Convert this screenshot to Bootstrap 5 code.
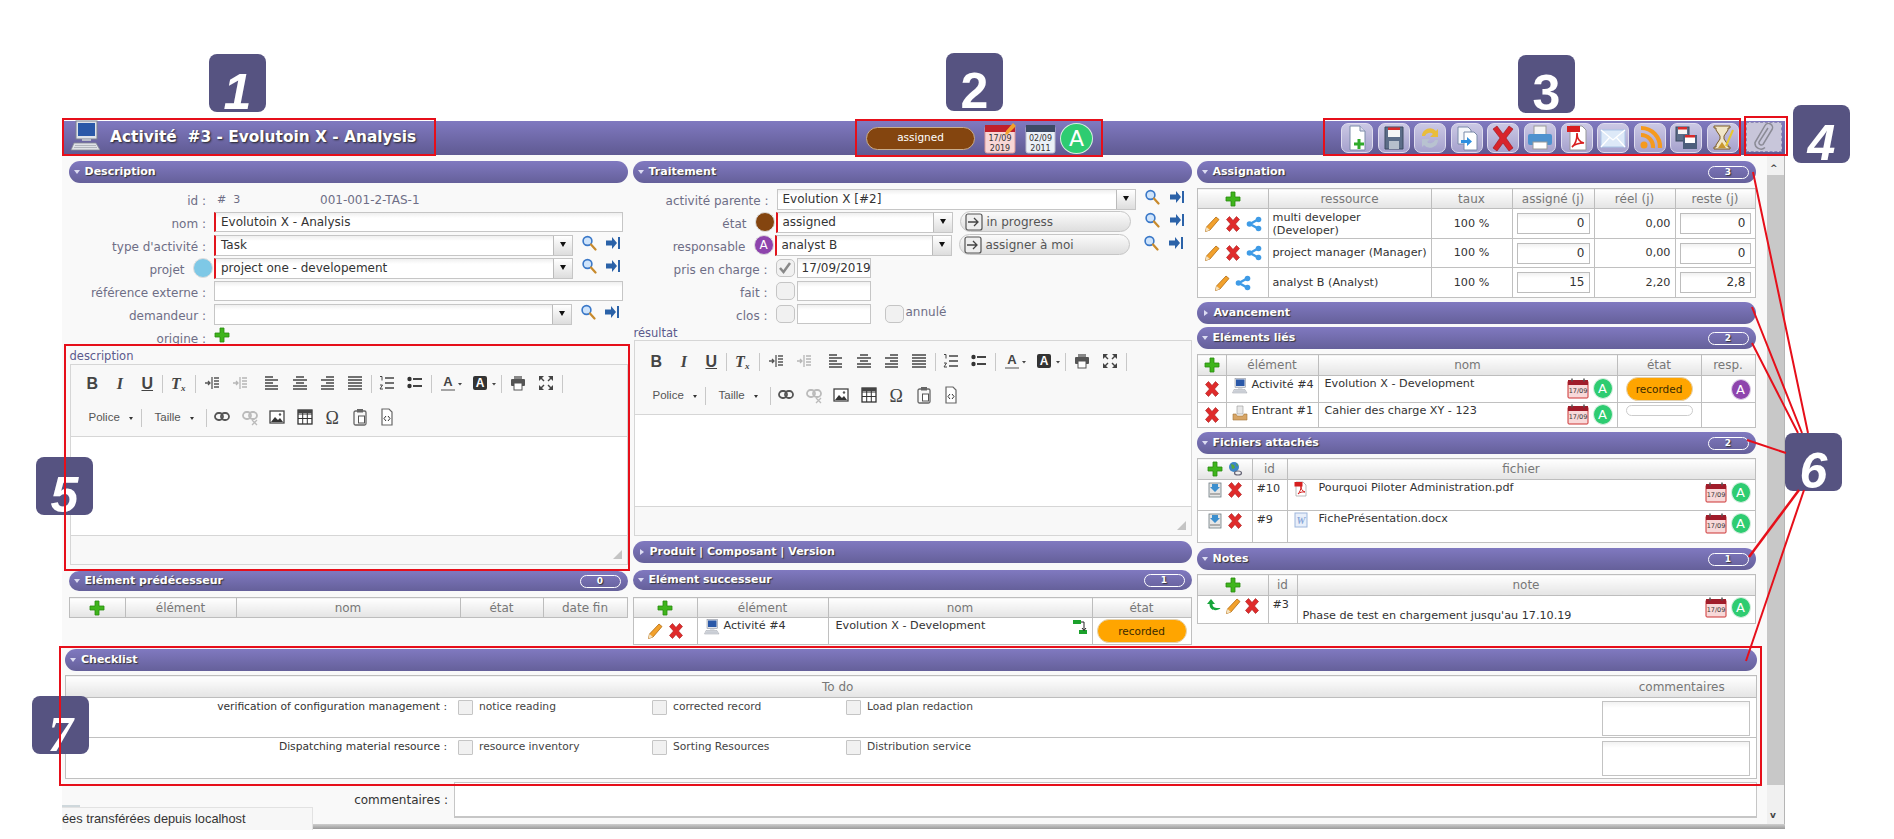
<!DOCTYPE html>
<html lang="fr"><head><meta charset="utf-8">
<link href="https://cdn.jsdelivr.net/npm/bootstrap@5.3.0/dist/css/bootstrap.min.css" rel="stylesheet">
<style>
html,body{height:839px;overflow:hidden;background:#fff}
body{font-family:"DejaVu Sans",sans-serif;font-size:11px;color:#333}
svg{display:block;flex:none}
.shot{position:relative;width:1894px;height:839px;overflow:hidden;padding:121px 0 0 62px}
.appbar{width:1723px;height:34px;background:linear-gradient(#8079c0,#5f5a92);color:#fff}
.appicon{margin:-4px 0 0 8px;width:32px;height:32px}
.apptitle{font-weight:700;font-size:15.4px;margin-left:8px;width:748px;text-shadow:1px 1px 2px #222;white-space:pre}
.statusgrp{width:260px;gap:9px}
.statuspill{width:109px;height:23px;border-radius:12px;background:#84450f;border:1px solid #c9ad8c;font-size:10.5px;color:#fff}
.toolgrp{margin-left:auto;gap:4.6px;margin-right:46px}
.tbtn{width:32px;height:30px;border:1px solid #dedcee;border-radius:7px;background:linear-gradient(#cbc8e4,#a5a1cd)}
.clipbtn{position:absolute;left:1746px;top:122px;width:36px;height:30px;background:#c8c6da;border:1px dashed #8d89b5}
.work{width:1723px;height:669px;background:#f9f9f9;border-right:1px solid #b5b5b5}
.pane{width:1706px;height:669px;position:relative;overflow:hidden}
.cols{height:494px;padding:6px 0 0 6.5px;gap:5px}
.colm{width:559px}
.sect{height:22px;border-radius:11px;background:linear-gradient(#8079c0,#65609a);color:#fff;font-weight:700;font-size:11px;padding:0 7px 0 5px;text-shadow:1px 1px 1px #333;flex:none}
.sect.h20{height:20px}
.sect .tri{width:0;height:0;border-left:3.5px solid transparent;border-right:3.5px solid transparent;border-top:4px solid #dcdcf2;margin-right:5px}
.sect .tri.shut{border-top:3.5px solid transparent;border-bottom:3.5px solid transparent;border-left:4px solid #dcdcf2;border-right:0;margin-right:6px;margin-left:2px}
.cnt{margin-left:auto;width:41px;height:13px;border:1px solid #fff;border-radius:7px;font-size:9px;line-height:11px;text-align:center}
.frow{height:23px;color:#6e6e86}
.lab{text-align:right;flex:none;padding-right:8px;font-size:12px;white-space:nowrap}
.fx{height:20px;border:1px solid #c6c6c6;background:linear-gradient(#efefef 0,#fff 5px);padding:0 0 0 5px;font-size:12px;color:#333;line-height:18px;white-space:nowrap;overflow:hidden}
.req{border-left:2px solid #e2141c}
.arrowbox{margin-left:auto;width:19px;height:100%;border-left:1px solid #bbb;background:linear-gradient(#fff,#ddd);flex:none}
.arrowbox::after{content:"";display:block;margin:6px auto 0;width:0;height:0;border-left:3.5px solid transparent;border-right:3.5px solid transparent;border-top:5px solid #111}
.dot{width:20px;height:20px;border-radius:50%;flex:none;border:1px solid #ddd}
.round{color:#fff;text-align:center}
.trans{height:21px;width:171px;border:1px solid #c6c6c6;border-radius:11px;background:linear-gradient(#fbfbfb,#dedede);font-size:12px;color:#555;gap:4px;padding-left:4px}
.ck{width:19px;height:18px;border:1px solid #c5c5c5;border-radius:5px;background:#f1f1f1;flex:none}
.edl{height:14px;line-height:13px;font-size:11.5px;color:#5b5a8c;padding-left:1px}
.edit{border:1px solid #d6d6d6;background:#f8f8f8;margin-left:1px;width:558px}
.edbar{border-bottom:1px solid #d6d6d6;padding:2px 0 0 8px}
.edbar.low{padding-top:4px}
.edrow{height:34px;color:#333}
.ei{width:27.5px;height:20px;font-family:"Liberation Sans",sans-serif;font-size:16px;font-weight:700;color:#444;text-align:center;line-height:20px;flex:none}
.ei.sf{font-family:"Liberation Serif",serif}
.ei.gp{margin-left:5px}
.ei.gq{margin-left:3px}
.sep{width:1px;height:18px;background:#c8c8c8;margin:0 2px;flex:none}
.sep.sa{margin:0 1.5px 0 1px}
.sep.sb{margin:0 2.5px 0 3px}
.sep.sc{margin:0 3px 0 9px}
.combo{font-family:"Liberation Sans",sans-serif;font-size:11.5px;color:#555;flex:none}
.combo::after{content:"";display:inline-block;margin-left:9px;vertical-align:middle;border-left:2.5px solid transparent;border-right:2.5px solid transparent;border-top:3px solid #333}
.cpol{width:52px;padding-left:10px;box-sizing:content-box}
.ctal{width:51px;padding-left:11px;box-sizing:content-box}
.sep.sd{margin:0 2px 0 0}
.edbody{background:#fff;border-bottom:1px solid #d6d6d6}
.edfoot{position:relative}
.edfoot::after{content:"";position:absolute;right:5px;bottom:5px;width:0;height:0;border-bottom:9px solid #c4c4c4;border-left:9px solid transparent}
table.grid{width:100%;table-layout:fixed;border-collapse:collapse;background:#fff;font-size:11.2px;margin:0}
table.grid th{height:20px;background:linear-gradient(#fff,#e4e4e4);border:1px solid #bdbdbd;font-weight:400;color:#777;text-align:center;padding:0;font-size:12px}
table.grid.thk th{height:21px}
table.grid td{border:1px solid #c0c0c0;padding:0 4px;vertical-align:middle;color:#333;overflow:hidden;white-space:nowrap;position:relative;line-height:14px}
.ico{gap:5px}
.num{height:21px;border:1px solid #bdbdbd;text-align:right;padding:0 4px;line-height:19px;background:linear-gradient(#f1f1f1,#fff 5px);font-size:12px}
.pill{height:24px;border-radius:12px;background:#ffa500;text-align:center;line-height:22px;border:1px solid #e4d3b2;font-size:10.5px;color:#3b2a00}
.pill.none{height:11px;background:#fff;border-color:#ccc}
.cal{width:22px;height:21px}
.av{width:20px;height:21px;border-radius:50%;background:#2ecc71;color:#fff;font-size:13px;line-height:20px;text-align:center;flex:none;border:1px solid #d7eee0}
.av.big{width:33px;height:31px;line-height:30px;font-size:22px;margin-left:-5px}
.av.vi{background:#8e44ad;border-color:#dcd0e6}
.list{width:1692px;margin-left:3px}
table.grid.chk td{vertical-align:top;padding:2px 0 0 0}
table.grid.chk td+td,table.grid.chk th+th{border-left:0}
table.grid.chk td:first-child,table.grid.chk th:first-child{border-right:0;padding-left:8px}
table.grid.chk td:first-child{padding-left:0}
table.grid.chk th+th{padding-left:6px}
.chkitem{gap:6px;width:194px;flex:none;font-size:10.7px;color:#444;line-height:14px}
.chkitem .ck{width:15px;height:15px;border-radius:1px}
.chklab{width:392px;text-align:right;padding-right:11px;font-size:10.7px;color:#333;flex:none;line-height:14px}
.note{width:148px;height:35px;border:1px solid #c3c3c3;background:linear-gradient(#f2f2f2,#fff 6px);margin:1px 7px 0 0}
.cmtrow{margin-top:3px}
.cmtbox{margin-left:6px;width:1303px;height:36px;border:1px solid #c6c6c6;border-bottom:2px solid #c6c6c6;background:#fff}
.sbar{width:17px;height:669px;background:#f0f0f0;position:relative;flex:none}
.sbar .thumb{position:absolute;left:0;right:0;top:20px;height:610px;background:#c8c8c8}
.sbar span{position:absolute;left:3px;font-size:9px;color:#444;line-height:10px;font-weight:700}
.split{width:1723px;height:5px;background:linear-gradient(#cfcfcf,#9a9a9a)}
.dlbar{position:absolute;left:62px;top:807px;width:251px;height:23px;background:#f7f7f7;border:1px solid #e2e2e2;border-width:1px 1px 0 0;font-size:12.8px;line-height:22px;color:#333;font-family:"Liberation Sans",sans-serif;white-space:nowrap}
.dlbar::before{content:"";position:absolute;left:0;top:-3px;width:18px;height:2px;background:#cfd8dc}
.mark{position:absolute;width:57px;height:58px;border-radius:8px;background:#565381;color:#fff;font-family:"Liberation Sans",sans-serif;font-weight:700;font-style:italic;font-size:50px;line-height:58px;text-align:center}
.box{position:absolute;border:2px solid #e60f1a;pointer-events:none}
.lines{position:absolute;left:0;top:0;pointer-events:none}
</style></head><body>
<svg width="0" height="0" style="position:absolute">
<defs>
<symbol id="plus" viewBox="0 0 16 16"><path d="M6 1h4v5h5v4h-5v5H6v-5H1V6h5z" fill="#3fb51c" stroke="#2a8b10" stroke-width=".8"/></symbol>
<symbol id="find" viewBox="0 0 16 16"><circle cx="6.500" cy="6" r="4.400" fill="#cfe4fb" stroke="#3a78c8" stroke-width="1.600"/><path d="M10 9.500l4.500 5" stroke="#c88a2c" stroke-width="2.200" stroke-linecap="round"/></symbol>
<symbol id="goto" viewBox="0 0 16 16"><path d="M1 5.500h6V2l5 6-5 6v-3.500H1z" fill="#2b62a8"/><rect x="13" y="2" width="2" height="12" fill="#2b62a8"/></symbol>
<symbol id="pen" viewBox="0 0 16 16"><path d="M12 1l3 2.500-9 10.500-4.500 1.500L2.500 11z" fill="#f2a12c" stroke="#b06a10" stroke-width=".8"/><path d="M2.500 11L6 14l-4.500 1.500z" fill="#f5e3c0"/></symbol>
<symbol id="del" viewBox="0 0 16 16"><path d="M1.500 3.500L4.500 .5 8 4.500 11.500 .5 14.500 3.500 10.500 8 14.500 12.500 11.500 15.500 8 11.500 4.500 15.500 1.500 12.500 5.500 8z" fill="#e02b2b" stroke="#a51616" stroke-width=".6"/></symbol>
<symbol id="share" viewBox="0 0 16 16"><path d="M12 3.500L4 8l8 4.500" fill="none" stroke="#3f9be6" stroke-width="2.400"/><circle cx="12.500" cy="3.500" r="2.800" fill="#3f9be6"/><circle cx="12.500" cy="12.500" r="2.800" fill="#3f9be6"/><circle cx="3.500" cy="8" r="2.800" fill="#3f9be6"/></symbol>
<symbol id="pc" viewBox="0 0 32 32"><rect x="6" y="1" width="21" height="18" fill="#dfe3ea" stroke="#7c8290"/><rect x="8" y="3" width="17" height="13" fill="#2a58a8"/><path d="M12 19h9v2h-9z" fill="#b7bcc6"/><path d="M4 23h22l4 7H1z" fill="#dfe2e7" stroke="#858b96" stroke-width=".8"/><path d="M5 25.500h21M4 27.500h23" stroke="#a5aab3" stroke-width=".8"/></symbol>
<symbol id="inbox" viewBox="0 0 16 16"><path d="M5 1h6v8H5z" fill="#e8e8e8" stroke="#999" stroke-width=".6"/><path d="M1 9h3l1 2h6l1-2h3v6H1z" fill="#d7a566" stroke="#a27435" stroke-width=".6"/></symbol>
<symbol id="pdf" viewBox="0 0 16 16"><path d="M3 1h7l3 3v11H3z" fill="#fff" stroke="#aaa" stroke-width=".8"/><rect x="1.500" y="1" width="8" height="4.500" fill="#d51f1f"/><path d="M5 13c2-2 3-5 3-8 0 3 1 5 4 6-3-.3-5 .2-7 2z" fill="none" stroke="#d51f1f" stroke-width="1"/></symbol>
<symbol id="word" viewBox="0 0 16 16"><rect x="2" y="1" width="12" height="14" fill="#e8effa" stroke="#9db6dc"/><text x="8" y="12" font-size="10" font-style="italic" font-weight="700" fill="#8aa8d8" text-anchor="middle" font-family="Liberation Serif">W</text></symbol>
<symbol id="dl" viewBox="0 0 16 16"><rect x="2" y="1" width="12" height="14" fill="#e6e6e6" stroke="#6d7a80" stroke-width=".8"/><path d="M5 2h6v3h2l-5 5-5-5h2z" fill="#3c8fce"/><path d="M3 12h10" stroke="#777"/></symbol>
<symbol id="globe" viewBox="0 0 16 16"><circle cx="7" cy="6" r="5" fill="#3d86c6"/><path d="M4 3l3 1 1 3-3 1zM9 2l2 2-1 2z" fill="#58a83a"/><ellipse cx="11" cy="12" rx="3.500" ry="2" fill="none" stroke="#667" stroke-width="1.200"/></symbol>
<symbol id="undo" viewBox="0 0 16 16"><path d="M1 6l4-5 4 5H6.500c0 3 2 4.500 8 4-2 3-11 4-11-4z" fill="#16a53a"/></symbol>
<symbol id="flow" viewBox="0 0 16 16"><rect x="1" y="1" width="8" height="4" fill="#1ba12c"/><rect x="7" y="11" width="8" height="4" fill="#1ba12c"/><path d="M9 3h3v8M10 9l2 2.500L14 9" fill="none" stroke="#222"/></symbol>
<symbol id="trans" viewBox="0 0 18 18"><rect x="1" y="1" width="16" height="16" rx="2" fill="#eee" stroke="#555" stroke-width="1.200"/><path d="M3 9h10M9 5l4 4-4 4" fill="none" stroke="#444" stroke-width="1.300"/></symbol>
<symbol id="calr" viewBox="0 0 22 21" preserveAspectRatio="none"><rect x="1" y="3" width="20" height="17" rx="1" fill="#f8d9d9" stroke="#c33"/><rect x="1" y="2" width="20" height="5" fill="#a01c2a"/><path d="M5 .5v3M17 .5v3" stroke="#555" stroke-width="1.500"/><text x="11" y="15" font-size="6.500" text-anchor="middle" fill="#333" font-family="DejaVu Sans">17/09</text></symbol>
<symbol id="tnew" viewBox="0 0 30 28"><path d="M8 2h10l5 5v19H8z" fill="#fff" stroke="#7a8aa8"/><path d="M18 2v5h5" fill="#dde" stroke="#7a8aa8"/><path d="M15.500 15h3v3.500h3.500v3h-3.500V25h-3v-3.500H12v-3h3.500z" fill="#2faa2a"/></symbol>
<symbol id="tsave" viewBox="0 0 30 28"><path d="M6 3h18v22H6z" fill="#5c6d88" stroke="#3c4a60"/><rect x="9" y="6" width="12" height="7" fill="#f5f5f5"/><rect x="9" y="3.500" width="12" height="2.500" fill="#d92a2a"/><rect x="10" y="17" width="10" height="8" fill="#b6bfcc"/></symbol>
<symbol id="tref" viewBox="0 0 30 28"><path d="M7 12a8 8 0 0 1 14-5l2-2v8h-8l3-3a5 5 0 0 0-8 2z" fill="#e9bd3b"/><path d="M23 16a8 8 0 0 1-14 5l-2 2v-8h8l-3 3a5 5 0 0 0 8-2z" fill="#b8c2d0"/></symbol>
<symbol id="tcopy" viewBox="0 0 30 28"><path d="M6 3h10l3 3v14H6z" fill="#f4f6fa" stroke="#7a8aa8"/><path d="M12 8h10l3 3v15H12z" fill="#fff" stroke="#7a8aa8"/><path d="M9 16h6v-3l5 4.500-5 4.500v-3H9z" fill="#2e8fe0"/></symbol>
<symbol id="tdel" viewBox="0 0 30 28"><path d="M5 5l4-3 6 8 6-8 4 3-7 9 7 10-4 3-6-8-6 8-4-3 7-10z" fill="#d8242c" stroke="#981219" stroke-width=".6"/></symbol>
<symbol id="tprt" viewBox="0 0 30 28"><rect x="9" y="2" width="12" height="9" fill="#f4f4f4" stroke="#999"/><rect x="3" y="10" width="24" height="11" rx="2" fill="#4e92cf"/><rect x="8" y="18" width="14" height="7" fill="#fff" stroke="#999"/></symbol>
<symbol id="tpdf" viewBox="0 0 30 28"><path d="M8 2h12l4 4v20H8z" fill="#fff" stroke="#999"/><rect x="5" y="2" width="13" height="6" fill="#d81e1e"/><path d="M10 23c4-3 5-9 5-14 0 6 2 9 7 10-5 0-9 1-12 4z" fill="none" stroke="#d81e1e" stroke-width="1.600"/></symbol>
<symbol id="tmail" viewBox="0 0 30 28"><rect x="3" y="6" width="24" height="17" fill="#dde9f8" stroke="#a9c4e6"/><path d="M3 6l12 10L27 6M3 23l9-10M27 23l-9-10" fill="none" stroke="#fff" stroke-width="1.300"/></symbol>
<symbol id="trss" viewBox="0 0 30 28"><circle cx="9" cy="21" r="3.500" fill="#f59a1e"/><path d="M6 11a12 12 0 0 1 12 13M6 4a19 19 0 0 1 19 20" fill="none" stroke="#f59a1e" stroke-width="4.200"/></symbol>
<symbol id="tmulti" viewBox="0 0 30 28"><rect x="5" y="3" width="13" height="14" fill="#5c6d88" stroke="#3c4a60"/><rect x="7" y="3" width="9" height="7" fill="#f4f4f4"/><rect x="7" y="3" width="9" height="2.500" fill="#d92a2a"/><rect x="12" y="11" width="14" height="14" fill="#4c5e7c"/><rect x="14" y="11" width="10" height="8" fill="#fff"/><rect x="14" y="11" width="10" height="2.500" fill="#d92a2a"/></symbol>
<symbol id="thour" viewBox="0 0 30 28"><path d="M6 2h16v2h-2v2l-4 6v3l4 6v2h2v2H6v-2h2v-2l4-6v-3L8 6V4H6z" fill="#f1e6c8" stroke="#7a5a26"/><path d="M10 24l4-6 4 6z" fill="#c9962e"/><path d="M25 6L18 22" stroke="#e7c82e" stroke-width="2"/></symbol>
<symbol id="clip" viewBox="0 0 30 28"><path d="M20 6l-9 14a2.500 2.500 0 0 0 4 2.500l9-15a4 4 0 0 0-7-4l-10 17a6 6 0 0 0 10 5" fill="none" stroke="#8b8b96" stroke-width="1.500" transform="translate(-1 -1)"/></symbol>
<symbol id="eout" viewBox="0 0 18 18"><path d="M9 3v12M11 4h5M11 7h5M11 10h5M11 13h5M2 9h5M5 7l2 2-2 2" fill="none" stroke="#555" stroke-width="1.300"/></symbol>
<symbol id="eleft" viewBox="0 0 18 18"><path d="M2 3h8M2 6h13M2 9h8M2 12h13M2 15h13" stroke="#444" stroke-width="1.500"/></symbol>
<symbol id="ecent" viewBox="0 0 18 18"><path d="M5 3h8M2 6h14M5 9h8M2 12h14M2 15h14" stroke="#444" stroke-width="1.500"/></symbol>
<symbol id="eright" viewBox="0 0 18 18"><path d="M8 3h8M3 6h13M8 9h8M3 12h13M3 15h13" stroke="#444" stroke-width="1.500"/></symbol>
<symbol id="ejust" viewBox="0 0 18 18"><path d="M2 3h14M2 6h14M2 9h14M2 12h14M2 15h14" stroke="#444" stroke-width="1.500"/></symbol>
<symbol id="eol" viewBox="0 0 18 18"><path d="M7 4h9M7 9h9M7 14h9" stroke="#444" stroke-width="1.600"/><path d="M2 2.500h2v4M2 11h2.500L2 15h3" fill="none" stroke="#444"/></symbol>
<symbol id="eul" viewBox="0 0 18 18"><path d="M7 5h9M7 12h9" stroke="#444" stroke-width="2"/><circle cx="3.500" cy="5" r="2.200" fill="#333"/><circle cx="3.500" cy="12" r="2.200" fill="#333"/></symbol>
<symbol id="eA" viewBox="0 0 28 18"><text x="14" y="12" font-family="Liberation Sans" font-weight="700" font-size="13" text-anchor="middle" fill="#444">A</text><path d="M7 16h14" stroke="#888" stroke-width="1.500"/><path d="M24 9h4l-2 2.500z" fill="#444"/></symbol>
<symbol id="eB" viewBox="0 0 32 18"><rect x="9" y="2" width="14" height="14" rx="2" fill="#333"/><text x="16" y="13" font-family="Liberation Sans" font-weight="700" font-size="12" text-anchor="middle" fill="#fff">A</text><path d="M28 9h4l-2 2.500z" fill="#444"/></symbol>
<symbol id="eprt" viewBox="0 0 18 18"><path d="M5 2h8v3H5z" fill="#888"/><rect x="2" y="5" width="14" height="7" rx="1" fill="#555"/><rect x="5" y="9" width="8" height="7" fill="#fff" stroke="#555"/></symbol>
<symbol id="efull" viewBox="0 0 18 18"><path d="M2 2h5l-2 2 2.500 2.500-1 1L4 5 2 7zM16 2v5l-2-2-2.500 2.500-1-1L13 4l-2-2zM2 16v-5l2 2 2.500-2.500 1 1L5 14l2 2zM16 16h-5l2-2-2.500-2.500 1-1L14 13l2-2z" fill="#444"/></symbol>
<symbol id="elink" viewBox="0 0 18 18"><rect x="2" y="5" width="8" height="7" rx="3.500" fill="none" stroke="#555" stroke-width="1.800"/><rect x="8" y="5" width="8" height="7" rx="3.500" fill="none" stroke="#555" stroke-width="1.800"/></symbol>
<symbol id="eunl" viewBox="0 0 18 18"><rect x="2" y="4" width="8" height="7" rx="3.500" fill="none" stroke="#bbb" stroke-width="1.800"/><rect x="8" y="4" width="8" height="7" rx="3.500" fill="none" stroke="#bbb" stroke-width="1.800"/><path d="M11 12l5 5M16 12l-5 5" stroke="#bbb" stroke-width="1.300"/></symbol>
<symbol id="eimg" viewBox="0 0 18 18"><rect x="2" y="3" width="14" height="12" fill="#fff" stroke="#444" stroke-width="1.300"/><path d="M3 14l4-5 3 3 2-2 3 4z" fill="#333"/><circle cx="12" cy="6.500" r="1.200" fill="#555"/></symbol>
<symbol id="etab" viewBox="0 0 18 18"><rect x="2" y="2" width="14" height="14" fill="#fff" stroke="#333" stroke-width="1.300"/><path d="M2 6h14M2 10.500h14M6.700 2v14M11.300 2v14" stroke="#333"/><rect x="2" y="2" width="14" height="3" fill="#444"/></symbol>
<symbol id="epaste" viewBox="0 0 18 18"><rect x="3" y="3" width="12" height="14" rx="1.500" fill="none" stroke="#666" stroke-width="1.300"/><rect x="6" y="1" width="6" height="3.500" fill="#666"/><rect x="7.500" y="8" width="6" height="7" fill="#fff" stroke="#555"/></symbol>
<symbol id="esrc" viewBox="0 0 18 18"><path d="M4 1h7l3 3v13H4z" fill="#fff" stroke="#666" stroke-width="1.200"/><path d="M8 8l-2 2.500L8 13M10 8l2 2.500L10 13" fill="none" stroke="#333"/></symbol>
</defs></svg>

<div class="shot">
  <header class="appbar d-flex align-items-center">
    <svg class="appicon"><use href="#pc"/></svg>
    <div class="apptitle">Activité  #3 - Evolutoin X - Analysis</div>
    <div class="statusgrp d-flex align-items-center">
      <div class="statuspill d-flex align-items-center justify-content-center ms-2">assigned</div>
      <svg width="32" height="31"><rect x="1" y="3" width="30" height="27" rx="2" fill="#f8d6d6" stroke="#d99"/><rect x="1" y="2" width="30" height="7" fill="#c0202c"/><path d="M29 0l3 3-8 8-3 1 1-4z" fill="#f2a12c"/><text x="16" y="18" font-size="8" text-anchor="middle" fill="#333" font-family="DejaVu Sans">17/09</text><text x="16" y="28" font-size="8" text-anchor="middle" fill="#333" font-family="DejaVu Sans">2019</text></svg>
      <svg width="31" height="31"><rect x="1" y="3" width="29" height="27" rx="2" fill="#eaf0f7" stroke="#bbc"/><rect x="1" y="2" width="29" height="7" fill="#3d4a66"/><text x="15.500" y="18" font-size="8" text-anchor="middle" fill="#333" font-family="DejaVu Sans">02/09</text><text x="15.500" y="28" font-size="8" text-anchor="middle" fill="#333" font-family="DejaVu Sans">2011</text></svg>
      <div class="av big">A</div>
    </div>
    <div class="toolgrp d-flex align-items-center">
      <div class="tbtn"><svg width="30" height="28"><use href="#tnew"/></svg></div>
      <div class="tbtn"><svg width="30" height="28"><use href="#tsave"/></svg></div>
      <div class="tbtn"><svg width="30" height="28"><use href="#tref"/></svg></div>
      <div class="tbtn"><svg width="30" height="28"><use href="#tcopy"/></svg></div>
      <div class="tbtn"><svg width="30" height="28"><use href="#tdel"/></svg></div>
      <div class="tbtn"><svg width="30" height="28"><use href="#tprt"/></svg></div>
      <div class="tbtn"><svg width="30" height="28"><use href="#tpdf"/></svg></div>
      <div class="tbtn"><svg width="30" height="28"><use href="#tmail"/></svg></div>
      <div class="tbtn"><svg width="30" height="28"><use href="#trss"/></svg></div>
      <div class="tbtn"><svg width="30" height="28"><use href="#tmulti"/></svg></div>
      <div class="tbtn"><svg width="30" height="28"><use href="#thour"/></svg></div>
    </div>
  </header>
  <div class="clipbtn"><svg width="34" height="28"><use href="#clip"/></svg></div>

  <div class="work d-flex">
    <div class="pane">
      <div class="cols d-flex">
        <!-- col 1 -->
        <div class="colm d-flex flex-column">
          <div class="sect d-flex align-items-center"><span class="tri"></span>Description</div>
          <div style="margin-top:6px">
            <div class="frow d-flex align-items-start"><div class="lab" style="width:145.500px;padding-top:3px">id :</div><div style="width:106px;padding-top:3px;font-size:11px;padding-left:3px"># &nbsp;3</div><div style="font-size:12px;padding-top:2px">001-001-2-TAS-1</div></div>
            <div class="frow d-flex align-items-start"><div class="lab" style="width:145.500px;padding-top:3px">nom :</div><div class="fx req" style="width:409px">Evolutoin X - Analysis</div></div>
            <div class="frow d-flex align-items-start"><div class="lab" style="width:145.500px;padding-top:3px">type d'activité :</div><div class="fx req d-flex" style="width:359px;height:21px">Task<span class="arrowbox"></span></div><svg class="ms-2" width="16" height="16"><use href="#find"/></svg><svg style="margin-left:8px" width="16" height="16"><use href="#goto"/></svg></div>
            <div class="frow d-flex align-items-start"><div class="lab" style="width:124px;padding-top:3px">projet</div><div class="dot" style="background:#7ec8e6;margin-right:1.500px"></div><div class="fx req d-flex" style="width:359px;height:21px">project one - developement<span class="arrowbox"></span></div><svg class="ms-2" width="16" height="16"><use href="#find"/></svg><svg style="margin-left:8px" width="16" height="16"><use href="#goto"/></svg></div>
            <div class="frow d-flex align-items-start"><div class="lab" style="width:145.500px;padding-top:3px">référence externe :</div><div class="fx" style="width:409px"></div></div>
            <div class="frow d-flex align-items-start"><div class="lab" style="width:145.500px;padding-top:3px">demandeur :</div><div class="fx d-flex" style="width:358px;height:21px"><span class="arrowbox"></span></div><svg class="ms-2" width="16" height="16"><use href="#find"/></svg><svg style="margin-left:8px" width="16" height="16"><use href="#goto"/></svg></div>
            <div class="frow d-flex align-items-start"><div class="lab" style="width:145.500px;padding-top:3px">origine :</div><svg width="16" height="16"><use href="#plus"/></svg></div>
          </div>
          <div class="edl">description</div>
          <div class="edit d-flex flex-column" style="height:201px">
            <div class="edbar" style="height:72px">
              <div class="edrow d-flex align-items-center"><span class="ei">B</span><span class="ei sf fst-italic">I</span><span class="ei text-decoration-underline">U</span><span class="sep sa"></span><span class="ei sf fst-italic">T<sub style="font-size:9px">x</sub></span><span class="sep sb"></span><span class="ei"><svg width="18" height="18" class="mx-auto"><use href="#eout"/></svg></span><span class="ei" style="opacity:.4"><svg width="18" height="18" class="mx-auto"><use href="#eout"/></svg></span><span class="ei gp"><svg width="18" height="18" class="mx-auto"><use href="#eleft"/></svg></span><span class="ei"><svg width="18" height="18" class="mx-auto"><use href="#ecent"/></svg></span><span class="ei"><svg width="18" height="18" class="mx-auto"><use href="#eright"/></svg></span><span class="ei"><svg width="18" height="18" class="mx-auto"><use href="#ejust"/></svg></span><span class="sep"></span><span class="ei"><svg width="18" height="18" class="mx-auto"><use href="#eol"/></svg></span><span class="ei"><svg width="18" height="18" class="mx-auto"><use href="#eul"/></svg></span><span class="sep"></span><span class="ei"><svg width="28" height="18"><use href="#eA"/></svg></span><span class="ei gq"><svg width="32" height="18" style="overflow:visible"><use href="#eB"/></svg></span><span class="sep sc"></span><span class="ei"><svg width="18" height="18" class="mx-auto"><use href="#eprt"/></svg></span><span class="ei"><svg width="18" height="18" class="mx-auto"><use href="#efull"/></svg></span><span class="sep"></span></div>
              <div class="edrow d-flex align-items-center"><span class="combo cpol">Police</span><span class="sep sd"></span><span class="combo ctal">Taille</span><span class="sep sd"></span><span class="ei"><svg width="18" height="18" class="mx-auto"><use href="#elink"/></svg></span><span class="ei"><svg width="18" height="18" class="mx-auto"><use href="#eunl"/></svg></span><span class="ei"><svg width="18" height="18" class="mx-auto"><use href="#eimg"/></svg></span><span class="ei"><svg width="18" height="18" class="mx-auto"><use href="#etab"/></svg></span><span class="ei sf fw-normal" style="font-size:18px">Ω</span><span class="ei"><svg width="18" height="18" class="mx-auto"><use href="#epaste"/></svg></span><span class="ei"><svg width="18" height="18" class="mx-auto"><use href="#esrc"/></svg></span></div>
            </div>
            <div class="edbody" style="height:99px"></div>
            <div class="edfoot flex-grow-1"></div>
          </div>
          <div class="sect h20 d-flex align-items-center" style="margin-top:6px"><span class="tri"></span>Elément prédécesseur<span class="cnt">0</span></div>
          <table class="grid" style="margin-top:6px"><colgroup><col style="width:56px"><col style="width:111px"><col style="width:224px"><col style="width:83px"><col></colgroup><tr><th><svg class="mx-auto" width="16" height="16"><use href="#plus"/></svg></th><th>élément</th><th>nom</th><th>état</th><th>date fin</th></tr></table>
        </div>
        <!-- col 2 -->
        <div class="colm d-flex flex-column">
          <div class="sect d-flex align-items-center"><span class="tri"></span>Traitement</div>
          <div style="margin-top:6px">
            <div class="frow d-flex align-items-start"><div class="lab" style="width:144px;padding-top:3px">activité parente :</div><div class="fx d-flex" style="width:359px;height:21px">Evolution X [#2]<span class="arrowbox"></span></div><svg class="ms-2" width="16" height="16"><use href="#find"/></svg><svg style="margin-left:9px" width="16" height="16"><use href="#goto"/></svg></div>
            <div class="frow d-flex align-items-start"><div class="lab" style="width:122px;padding-top:3px">état</div><div class="dot" style="background:#84450f;margin-right:1px"></div><div class="fx req d-flex" style="width:177px;height:21px">assigned<span class="arrowbox"></span></div><div class="trans d-flex align-items-center" style="margin:-1px 0 0 7px"><svg width="18" height="18"><use href="#trans"/></svg>in progress</div><svg style="margin-left:13px" width="16" height="16"><use href="#find"/></svg><svg style="margin-left:9px" width="16" height="16"><use href="#goto"/></svg></div>
            <div class="frow d-flex align-items-start"><div class="lab" style="width:121px;padding-top:3px">responsable</div><div class="dot round" style="background:#8e44ad;margin-right:1px;line-height:18px;font-size:12px">A</div><div class="fx req d-flex" style="width:177px;height:21px">analyst B<span class="arrowbox"></span></div><div class="trans d-flex align-items-center" style="margin:-1px 0 0 7px"><svg width="18" height="18"><use href="#trans"/></svg>assigner à moi</div><svg style="margin-left:13px" width="16" height="16"><use href="#find"/></svg><svg style="margin-left:9px" width="16" height="16"><use href="#goto"/></svg></div>
            <div class="frow d-flex align-items-start"><div class="lab" style="width:143px;padding-top:3px">pris en charge :</div><div class="ck d-flex align-items-center justify-content-center" style="margin-top:1px"><svg width="14" height="14" viewBox="0 0 14 14"><path d="M2 7l3.500 4L12 2" fill="none" stroke="#888" stroke-width="2.500"/></svg></div><div class="fx" style="width:74px;margin-left:2px;padding-left:4px">17/09/2019</div></div>
            <div class="frow d-flex align-items-start"><div class="lab" style="width:143px;padding-top:3px">fait :</div><div class="ck" style="margin-top:1px"></div><div class="fx" style="width:74px;margin-left:2px"></div></div>
            <div class="frow d-flex align-items-start"><div class="lab" style="width:143px;padding-top:3px">clos :</div><div class="ck" style="margin-top:1px"></div><div class="fx" style="width:74px;margin-left:2px"></div><div class="ck" style="margin:1px 2px 0 14px"></div><span class="lh-sm" style="font-size:12px;padding-top:1px">annulé</span></div>
          </div>
          <div class="edl" style="height:13px">résultat</div>
          <div class="edit d-flex flex-column" style="height:196px">
            <div class="edbar low" style="height:74px">
              <div class="edrow d-flex align-items-center"><span class="ei">B</span><span class="ei sf fst-italic">I</span><span class="ei text-decoration-underline">U</span><span class="sep sa"></span><span class="ei sf fst-italic">T<sub style="font-size:9px">x</sub></span><span class="sep sb"></span><span class="ei"><svg width="18" height="18" class="mx-auto"><use href="#eout"/></svg></span><span class="ei" style="opacity:.4"><svg width="18" height="18" class="mx-auto"><use href="#eout"/></svg></span><span class="ei gp"><svg width="18" height="18" class="mx-auto"><use href="#eleft"/></svg></span><span class="ei"><svg width="18" height="18" class="mx-auto"><use href="#ecent"/></svg></span><span class="ei"><svg width="18" height="18" class="mx-auto"><use href="#eright"/></svg></span><span class="ei"><svg width="18" height="18" class="mx-auto"><use href="#ejust"/></svg></span><span class="sep"></span><span class="ei"><svg width="18" height="18" class="mx-auto"><use href="#eol"/></svg></span><span class="ei"><svg width="18" height="18" class="mx-auto"><use href="#eul"/></svg></span><span class="sep"></span><span class="ei"><svg width="28" height="18"><use href="#eA"/></svg></span><span class="ei gq"><svg width="32" height="18" style="overflow:visible"><use href="#eB"/></svg></span><span class="sep sc"></span><span class="ei"><svg width="18" height="18" class="mx-auto"><use href="#eprt"/></svg></span><span class="ei"><svg width="18" height="18" class="mx-auto"><use href="#efull"/></svg></span><span class="sep"></span></div>
              <div class="edrow d-flex align-items-center"><span class="combo cpol">Police</span><span class="sep sd"></span><span class="combo ctal">Taille</span><span class="sep sd"></span><span class="ei"><svg width="18" height="18" class="mx-auto"><use href="#elink"/></svg></span><span class="ei"><svg width="18" height="18" class="mx-auto"><use href="#eunl"/></svg></span><span class="ei"><svg width="18" height="18" class="mx-auto"><use href="#eimg"/></svg></span><span class="ei"><svg width="18" height="18" class="mx-auto"><use href="#etab"/></svg></span><span class="ei sf fw-normal" style="font-size:18px">Ω</span><span class="ei"><svg width="18" height="18" class="mx-auto"><use href="#epaste"/></svg></span><span class="ei"><svg width="18" height="18" class="mx-auto"><use href="#esrc"/></svg></span></div>
            </div>
            <div class="edbody" style="height:92px"></div>
            <div class="edfoot flex-grow-1"></div>
          </div>
          <div class="sect d-flex align-items-center" style="margin-top:5px"><span class="tri shut"></span>Produit | Composant | Version</div>
          <div class="sect h20 d-flex align-items-center" style="margin-top:7px"><span class="tri"></span>Elément successeur<span class="cnt">1</span></div>
          <table class="grid" style="margin-top:7px"><colgroup><col style="width:64px"><col style="width:131px"><col style="width:264px"><col></colgroup>
            <tr><th><svg class="mx-auto" width="16" height="16"><use href="#plus"/></svg></th><th>élément</th><th>nom</th><th>état</th></tr>
            <tr style="height:27px"><td><div class="ico d-flex justify-content-center"><svg width="16" height="16"><use href="#pen"/></svg><svg width="16" height="16"><use href="#del"/></svg></div></td><td class="align-top"><div class="d-flex gap-1" style="padding:1px 0 0 2px"><svg width="16" height="16" viewBox="0 0 32 32"><use href="#pc"/></svg>Activité #4</div></td><td class="align-top" style="padding-top:1px"><div class="d-flex" style="padding-left:3px">Evolution X - Development<svg class="ms-auto" width="16" height="16"><use href="#flow"/></svg></div></td><td><div class="pill">recorded</div></td></tr>
          </table>
        </div>
        <!-- col 3 -->
        <div class="colm d-flex flex-column">
          <div class="sect d-flex align-items-center"><span class="tri"></span>Assignation<span class="cnt">3</span></div>
          <table class="grid" style="margin-top:5px"><colgroup><col style="width:71px"><col style="width:163px"><col style="width:81px"><col style="width:82px"><col style="width:81px"><col></colgroup>
            <tr><th><svg class="mx-auto" width="16" height="16"><use href="#plus"/></svg></th><th>ressource</th><th>taux</th><th>assigné (j)</th><th>réel (j)</th><th>reste (j)</th></tr>
            <tr style="height:30px"><td><div class="ico d-flex justify-content-center"><svg width="16" height="16"><use href="#pen"/></svg><svg width="16" height="16"><use href="#del"/></svg><svg width="16" height="16"><use href="#share"/></svg></div></td><td style="white-space:normal;line-height:13px">multi developer (Developer)</td><td class="text-center">100 %</td><td><div class="num">0</div></td><td class="text-end">0,00</td><td><div class="num">0</div></td></tr>
            <tr style="height:29px"><td><div class="ico d-flex justify-content-center"><svg width="16" height="16"><use href="#pen"/></svg><svg width="16" height="16"><use href="#del"/></svg><svg width="16" height="16"><use href="#share"/></svg></div></td><td>project manager (Manager)</td><td class="text-center">100 %</td><td><div class="num">0</div></td><td class="text-end">0,00</td><td><div class="num">0</div></td></tr>
            <tr style="height:30px"><td><div class="ico d-flex justify-content-center"><svg width="16" height="16"><use href="#pen"/></svg><svg width="16" height="16"><use href="#share"/></svg></div></td><td>analyst B (Analyst)</td><td class="text-center">100 %</td><td><div class="num">15</div></td><td class="text-end">2,20</td><td><div class="num">2,8</div></td></tr>
          </table>
          <div class="sect d-flex align-items-center" style="margin-top:4px"><span class="tri shut"></span>Avancement</div>
          <div class="sect d-flex align-items-center" style="margin-top:3px"><span class="tri"></span>Eléments liés<span class="cnt">2</span></div>
          <table class="grid thk" style="margin-top:5px"><colgroup><col style="width:29px"><col style="width:92px"><col style="width:299px"><col style="width:84px"><col></colgroup>
            <tr><th><svg class="mx-auto" width="16" height="16"><use href="#plus"/></svg></th><th>élément</th><th>nom</th><th>état</th><th>resp.</th></tr>
            <tr style="height:27px"><td class="p-0"><svg class="mx-auto" width="16" height="16"><use href="#del"/></svg></td><td class="align-top" style="padding:2px 0 0 5px"><div class="d-flex gap-1"><svg width="16" height="16" viewBox="0 0 32 32"><use href="#pc"/></svg>Activité #4</div></td><td class="align-top"><div class="d-flex" style="padding:1px 0 0 2px">Evolution X - Development<svg class="ms-auto cal" style="margin-top:1px"><use href="#calr"/></svg><div class="av ms-1" style="margin-top:1px">A</div></div></td><td class="px-1"><div class="pill mx-1">recorded</div></td><td><div class="av vi ms-auto">A</div></td></tr>
            <tr style="height:25px"><td class="p-0"><svg class="mx-auto" width="16" height="16"><use href="#del"/></svg></td><td class="align-top" style="padding:1px 0 0 5px"><div class="d-flex gap-1"><svg width="16" height="18" viewBox="0 0 16 16"><use href="#inbox"/></svg>Entrant #1</div></td><td class="align-top"><div class="d-flex" style="padding:1px 0 0 2px">Cahier des charge XY - 123<svg class="ms-auto cal"><use href="#calr"/></svg><div class="av ms-1">A</div></div></td><td class="align-top px-1" style="padding-top:2px"><div class="pill none mx-1"></div></td><td></td></tr>
          </table>
          <div class="sect d-flex align-items-center" style="margin-top:4px"><span class="tri"></span>Fichiers attachés<span class="cnt">2</span></div>
          <table class="grid thk" style="margin-top:4px"><colgroup><col style="width:55px"><col style="width:35px"><col></colgroup>
            <tr><th><div class="d-flex gap-1 justify-content-center"><svg width="16" height="16"><use href="#plus"/></svg><svg width="16" height="16"><use href="#globe"/></svg></div></th><th>id</th><th>fichier</th></tr>
            <tr style="height:31px"><td class="align-top" style="padding-top:2px"><div class="d-flex gap-1 justify-content-center"><svg width="16" height="16"><use href="#dl"/></svg><svg width="16" height="16"><use href="#del"/></svg></div></td><td class="align-top ps-1" style="padding-top:2px">#10</td><td class="align-top"><div class="d-flex" style="padding:1px 0 0 1px"><svg width="16" height="16"><use href="#pdf"/></svg><span style="margin-left:10px">Pourquoi Piloter Administration.pdf</span><svg class="ms-auto cal" style="margin-top:1px"><use href="#calr"/></svg><div class="av ms-1" style="margin-top:1px">A</div></div></td></tr>
            <tr style="height:32px"><td class="align-top" style="padding-top:2px"><div class="d-flex gap-1 justify-content-center"><svg width="16" height="16"><use href="#dl"/></svg><svg width="16" height="16"><use href="#del"/></svg></div></td><td class="align-top ps-1" style="padding-top:2px">#9</td><td class="align-top"><div class="d-flex" style="padding:1px 0 0 1px"><svg width="16" height="16"><use href="#word"/></svg><span style="margin-left:10px">FichePrésentation.docx</span><svg class="ms-auto cal" style="margin-top:1px"><use href="#calr"/></svg><div class="av ms-1" style="margin-top:1px">A</div></div></td></tr>
          </table>
          <div class="sect d-flex align-items-center" style="margin-top:5px"><span class="tri"></span>Notes<span class="cnt">1</span></div>
          <table class="grid thk" style="margin-top:4px"><colgroup><col style="width:71px"><col style="width:29px"><col></colgroup>
            <tr><th><svg class="mx-auto" width="16" height="16"><use href="#plus"/></svg></th><th>id</th><th>note</th></tr>
            <tr style="height:28px"><td class="align-top" style="padding:2px 0 0 0"><div class="d-flex justify-content-center" style="gap:3px"><svg width="16" height="16"><use href="#undo"/></svg><svg width="16" height="16"><use href="#pen"/></svg><svg width="16" height="16"><use href="#del"/></svg></div></td><td class="align-top ps-1" style="padding-top:2px">#3</td><td class="align-top"><div class="d-flex" style="padding:0 0 0 1px"><span style="margin-top:13px">Phase de test en chargement jusqu'au 17.10.19</span><svg class="ms-auto cal" style="margin-top:1px"><use href="#calr"/></svg><div class="av ms-1" style="margin-top:1px">A</div></div></td></tr>
          </table>
        </div>
      </div>
      <section class="list">
        <div class="sect d-flex align-items-center"><span class="tri"></span>Checklist</div>
        <table class="grid chk" style="margin-top:4px"><colgroup><col><col style="width:155px"></colgroup>
          <tr><th style="height:22px">To do</th><th>commentaires</th></tr>
          <tr style="height:40px"><td><div class="d-flex"><div class="chklab">verification of configuration management :</div><div class="chkitem d-flex"><span class="ck"></span>notice reading</div><div class="chkitem d-flex"><span class="ck"></span>corrected record</div><div class="chkitem d-flex"><span class="ck"></span>Load plan redaction</div></div></td><td><div class="note"></div></td></tr>
          <tr style="height:41px"><td><div class="d-flex"><div class="chklab">Dispatching material resource :</div><div class="chkitem d-flex"><span class="ck"></span>resource inventory</div><div class="chkitem d-flex"><span class="ck"></span>Sorting Resources</div><div class="chkitem d-flex"><span class="ck"></span>Distribution service</div></div></td><td><div class="note"></div></td></tr>
        </table>
      </section>
      <div class="cmtrow d-flex align-items-center"><div class="lab" style="width:386px;padding-right:0">commentaires :</div><div class="cmtbox"></div></div>
    </div>
    <aside class="sbar"><span style="top:8px">^</span><div class="thumb"></div><span style="top:655px">v</span></aside>
  </div>
  <div class="split"></div>
  <div class="dlbar">ées transférées depuis localhost</div>

  <div class="mark" style="left:209px;top:54px">1</div>
  <div class="mark" style="left:946px;top:53px;font-style:normal">2</div>
  <div class="mark" style="left:1518px;top:55px;font-style:normal">3</div>
  <div class="mark" style="left:1793px;top:105px">4</div>
  <div class="mark" style="left:36px;top:457px">5</div>
  <div class="mark" style="left:1785px;top:433px">6</div>
  <div class="mark" style="left:32px;top:696px;font-family:'Liberation Serif',serif">7</div>
  <div class="box" style="left:62px;top:118px;width:374px;height:38px"></div>
  <div class="box" style="left:855px;top:119px;width:248px;height:38px"></div>
  <div class="box" style="left:1323px;top:118px;width:418px;height:38px"></div>
  <div class="box" style="left:1744px;top:116px;width:44px;height:40px"></div>
  <div class="box" style="left:64px;top:344px;width:566px;height:227px"></div>
  <div class="box" style="left:59px;top:646px;width:1703px;height:140px"></div>
  <svg class="lines" width="1894" height="839"><g stroke="#e60f1a" stroke-width="2" fill="none"><path d="M1753 172L1808 433M1752 307L1802 433M1752 343L1798 433M1747 440L1786 453"/><path d="M1749 557L1799 490" stroke-width="2.500"/><path d="M1746 661L1804 490"/></g></svg>
</div>
<script src="https://cdn.jsdelivr.net/npm/bootstrap@5.3.0/dist/js/bootstrap.bundle.min.js"></script>
</body></html>
